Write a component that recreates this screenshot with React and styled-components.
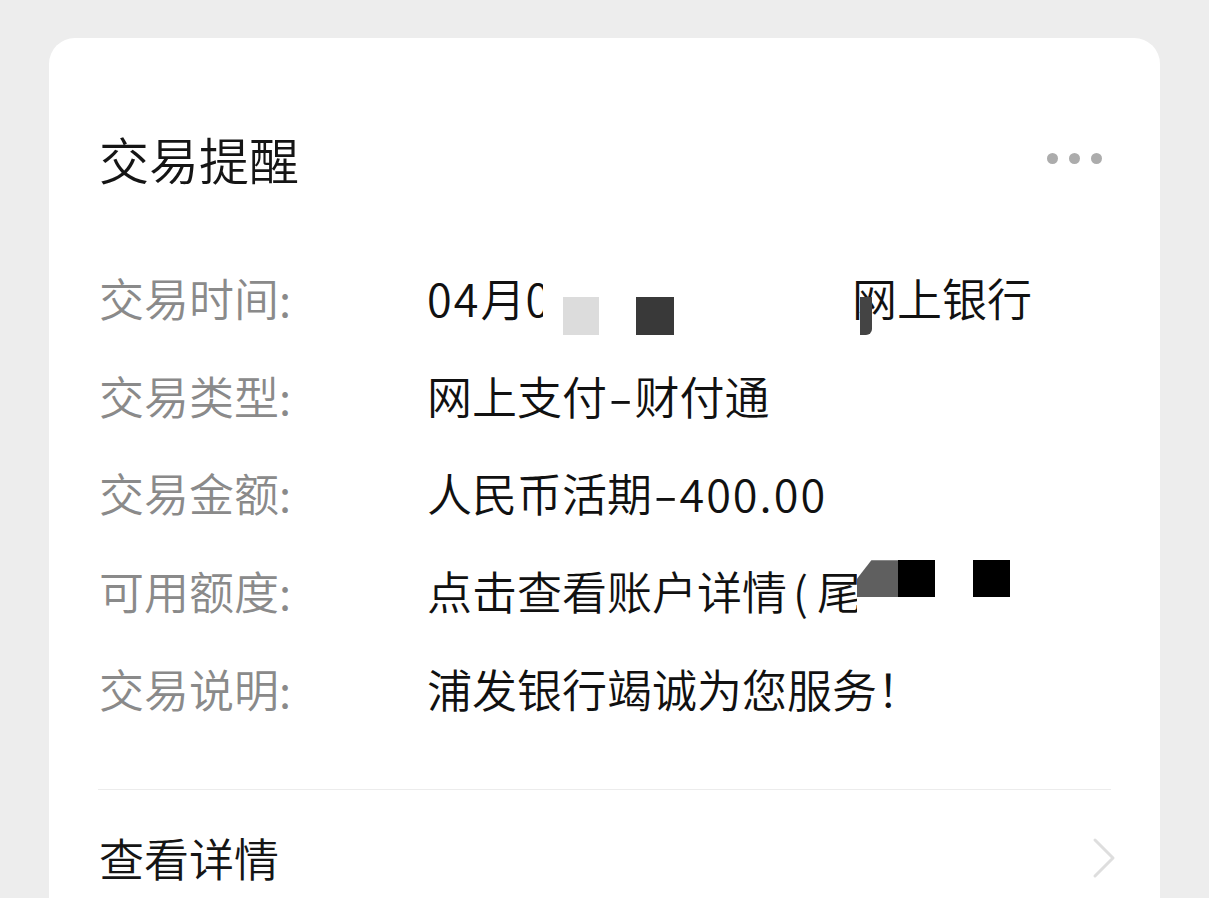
import React from "react";
import styled, { createGlobalStyle } from "styled-components";

const Global = createGlobalStyle`
  html, body { margin: 0; padding: 0; background: #ededed; }
  body { font-family: "Noto Sans CJK SC", "Noto Sans", sans-serif; }
`;

const Page = styled.div`
  width: 1209px;
  height: 898px;
  overflow: hidden;
  padding: 38px 49px 0 49px;
  box-sizing: border-box;
`;

const Card = styled.div`
  background: #fff;
  border-radius: 26px;
  padding: 90px 49px 0 50px;
  min-height: 920px;
`;

const Header = styled.div`
  display: flex;
  align-items: center;
  justify-content: space-between;
  height: 60px;
`;

const Title = styled.div`
  font-size: 50px;
  line-height: 60px;
  color: #151515;
  font-weight: 350;
`;

const Dots = styled.div`
  display: flex;
  gap: 11px;
  margin-right: 9px;
  span {
    width: 11px;
    height: 11px;
    border-radius: 50%;
    background: #acacac;
  }
`;

const Rows = styled.div`
  margin-top: 61px;
`;

const Row = styled.div`
  display: grid;
  grid-template-columns: 328px 1fr;
  height: 97.75px;
  align-items: center;
  font-size: 45px;
  line-height: 60px;
`;

const Label = styled.div`
  color: #8a8a8a;
  font-weight: 350;
`;

const Value = styled.div`
  color: #111;
  font-weight: 350;
  position: relative;
  white-space: nowrap;
  display: flex;
  align-items: center;
`;

const Num = styled.span`
  letter-spacing: 2px;
`;

const Dash = styled.span`
  display: inline-block;
  transform: scaleX(1.6);
  margin: 0 6px;
`;

const Paren = styled.span`
  display: inline-block;
  width: ${(p) => p.w}px;
  padding-left: 6px;
  box-sizing: border-box;
`;

const Clip = styled.span`
  display: inline-block;
  overflow: hidden;
  width: ${(p) => p.w}px;
`;

const Spacer = styled.span`
  display: inline-block;
  width: ${(p) => p.w}px;
`;

const Mask = styled.div`
  position: absolute;
  left: ${(p) => p.x}px;
  top: ${(p) => p.y}px;
  width: ${(p) => p.w}px;
  height: ${(p) => p.h}px;
  background: ${(p) => p.c};
  clip-path: ${(p) => p.clip || "none"};
  border-radius: ${(p) => p.r || "0"};
`;

const Divider = styled.div`
  height: 1px;
  background: #ececec;
  margin-top: 51px;
  margin-left: -1px;
`;

const Footer = styled.div`
  display: flex;
  align-items: center;
  justify-content: space-between;
  height: 136px;
`;

const FooterText = styled.div`
  font-size: 45px;
  line-height: 60px;
  color: #151515;
  font-weight: 350;
`;

const Chevron = styled.svg`
  width: 28px;
  height: 44px;
  margin-right: -8px;
`;

export default function App() {
  return (
    <>
      <Global />
      <Page>
        <Card>
          <Header>
            <Title>交易提醒</Title>
            <Dots>
              <span />
              <span />
              <span />
            </Dots>
          </Header>
          <Rows>
            <Row>
              <Label>交易时间:</Label>
              <Value>
                <Clip w={116}>
                  <Num>04</Num>月<Num>05</Num>
                </Clip>
                <Spacer w={309} />
                <span>网上银行</span>
                <Mask x={136} y={29} w={36} h={38} c="#dcdcdc" />
                <Mask x={209} y={29} w={38} h={38} c="#393939" />
                <Mask x={433} y={29} w={12} h={38} c="#444" r="0 0 6px 0" />
              </Value>
            </Row>
            <Row>
              <Label>交易类型:</Label>
              <Value>
                网上支付<Dash>-</Dash>财付通
              </Value>
            </Row>
            <Row>
              <Label>交易金额:</Label>
              <Value>
                人民币活期<Dash>-</Dash>
                <Num>400.00</Num>
              </Value>
            </Row>
            <Row>
              <Label>可用额度:</Label>
              <Value>
                <Clip w={430}>
                  点击查看账户详情<Paren w={30}>(</Paren>尾号
                </Clip>
                <Mask
                  x={430}
                  y={-1}
                  w={41}
                  h={37}
                  c="#5f5f5f"
                  clip="polygon(35% 0, 100% 0, 100% 100%, 0 100%, 0 50%)"
                />
                <Mask x={471} y={-1} w={37} h={37} c="#000" />
                <Mask x={546} y={-1} w={37} h={37} c="#000" />
              </Value>
            </Row>
            <Row>
              <Label>交易说明:</Label>
              <Value>浦发银行竭诚为您服务！</Value>
            </Row>
          </Rows>
          <Divider />
          <Footer>
            <FooterText>查看详情</FooterText>
            <Chevron viewBox="0 0 28 44">
              <path
                d="M4 4 L22 22 L4 40"
                fill="none"
                stroke="#dedede"
                strokeWidth="3"
                strokeLinecap="round"
                strokeLinejoin="round"
              />
            </Chevron>
          </Footer>
        </Card>
      </Page>
    </>
  );
}
